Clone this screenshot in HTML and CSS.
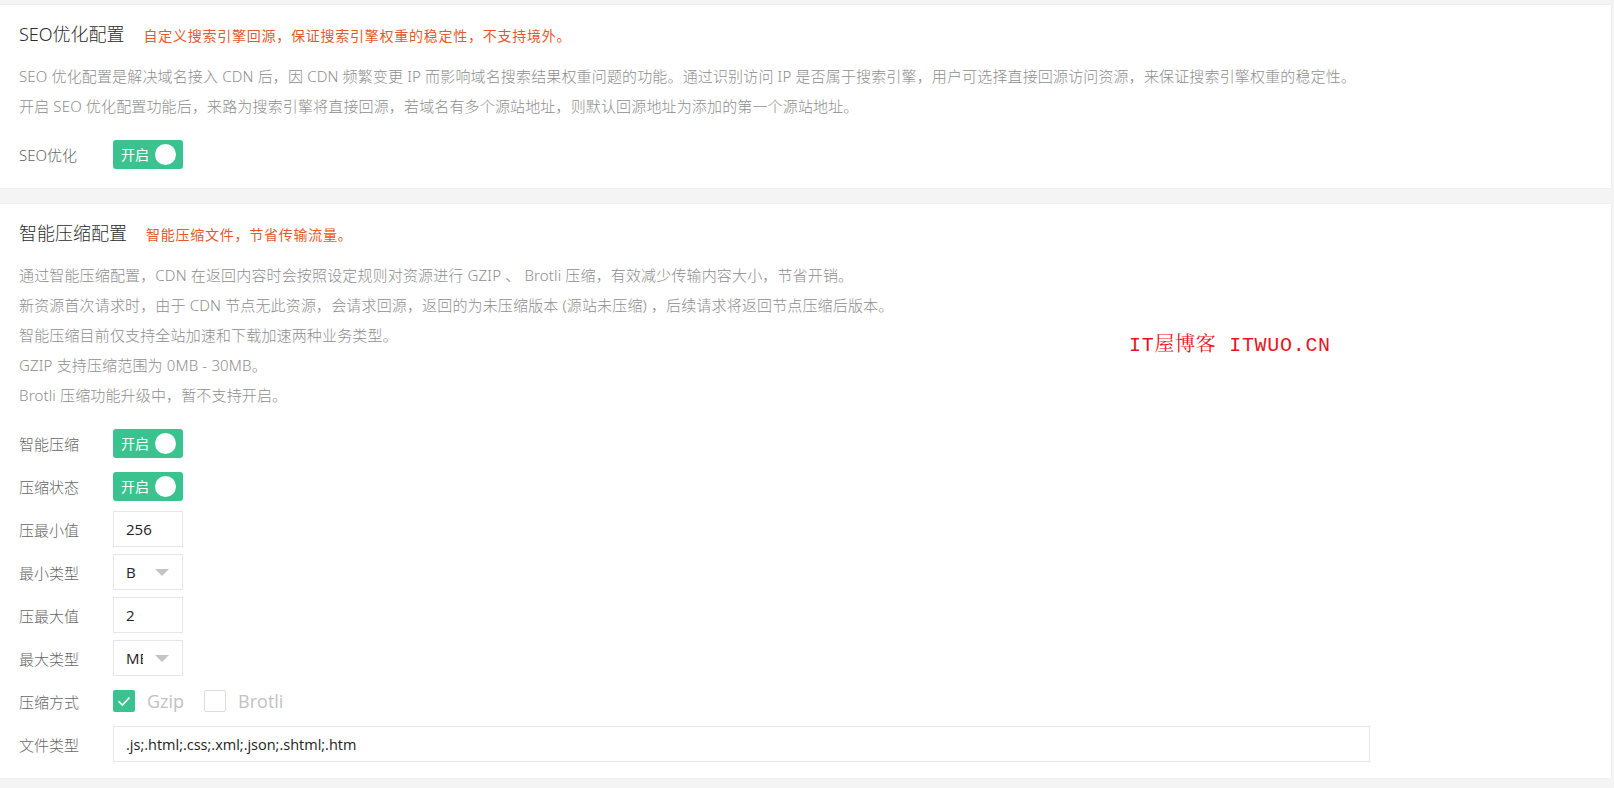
FILE: index.html
```html
<!DOCTYPE html>
<html lang="zh-CN">
<head>
    <meta charset="UTF-8">
    <title>CDN 配置</title>
    <link rel="stylesheet" href="styles.css">
</head>
<body>
    <div class="card">
        <div class="card-head">
            <h3>SEO优化配置</h3>
            <span class="tip">自定义搜索引擎回源，保证搜索引擎权重的稳定性，不支持境外。</span>
        </div>
        <div class="desc">
            <p>SEO 优化配置是解决域名接入 CDN 后，因 CDN 频繁变更 IP 而影响域名搜索结果权重问题的功能。通过识别访问 IP 是否属于搜索引擎，用户可选择直接回源访问资源，来保证搜索引擎权重的稳定性。</p>
            <p>开启 SEO 优化配置功能后，来路为搜索引擎将直接回源，若域名有多个源站地址，则默认回源地址为添加的第一个源站地址。</p>
        </div>
        <div class="form">
            <div class="row">
                <label>SEO优化</label>
                <div class="switch"><span>开启</span><i></i></div>
            </div>
        </div>
    </div>

    <div class="card">
        <div class="card-head">
            <h3>智能压缩配置</h3>
            <span class="tip">智能压缩文件，节省传输流量。</span>
        </div>
        <div class="desc">
            <p>通过智能压缩配置，CDN 在返回内容时会按照设定规则对资源进行 GZIP 、 Brotli 压缩，有效减少传输内容大小，节省开销。</p>
            <p>新资源首次请求时，由于 CDN 节点无此资源，会请求回源，返回的为未压缩版本 (源站未压缩) ，后续请求将返回节点压缩后版本。</p>
            <p>智能压缩目前仅支持全站加速和下载加速两种业务类型。</p>
            <p>GZIP 支持压缩范围为 0MB - 30MB。</p>
            <p>Brotli 压缩功能升级中，暂不支持开启。</p>
        </div>
        <div class="form">
            <div class="row">
                <label>智能压缩</label>
                <div class="switch"><span>开启</span><i></i></div>
            </div>
            <div class="row">
                <label>压缩状态</label>
                <div class="switch"><span>开启</span><i></i></div>
            </div>
            <div class="row">
                <label>压最小值</label>
                <div class="input small">256</div>
            </div>
            <div class="row">
                <label>最小类型</label>
                <div class="input small select"><span class="val">B</span><i class="caret"></i></div>
            </div>
            <div class="row">
                <label>压最大值</label>
                <div class="input small">2</div>
            </div>
            <div class="row">
                <label>最大类型</label>
                <div class="input small select"><span class="val">MB</span><i class="caret"></i></div>
            </div>
            <div class="row">
                <label>压缩方式</label>
                <div class="check on">
                    <svg width="22" height="22" viewBox="0 0 22 22"><path d="M5.5 11.2 L9.4 15 L16.5 7.5" fill="none" stroke="#fff" stroke-width="1.6"/></svg>
                </div>
                <span class="check-text">Gzip</span>
                <div class="check"></div>
                <span class="check-text">Brotli</span>
            </div>
            <div class="row">
                <label>文件类型</label>
                <div class="input wide">.js;.html;.css;.xml;.json;.shtml;.htm</div>
            </div>
        </div>
        <div class="watermark">IT屋博客 ITWUO.CN</div>
    </div>
</body>
</html>
```

FILE: styles.css
```css
body {
    margin: 0;
    padding: 5px 3px 0 0;
    background-color: #f4f4f4;
    font-family: "Noto Sans", "Noto Sans CJK SC", sans-serif;
    color: #333;
}

.card {
    position: relative;
    background-color: #fff;
    padding: 17px 19px 16px;
    margin-bottom: 16px;
    box-shadow: 0 0 2px rgba(0, 0, 0, 0.06);
}

.card-head {
    display: flex;
    align-items: baseline;
    height: 24px;
    line-height: 24px;
}

.card-head h3 {
    margin: 0;
    font-size: 18px;
    font-weight: 300;
    color: #2b2b2b;
}

.card-head .tip {
    margin-left: 19px;
    font-size: 14px;
    letter-spacing: 0.75px;
    color: #e25a2c;
}

.desc {
    margin-top: 15px;
}

.desc p {
    margin: 0;
    font-size: 15px;
    line-height: 30px;
    font-weight: 300;
    letter-spacing: 0.15px;
    color: #8e8e8e;
}

.form {
    margin-top: 15px;
    display: flex;
    flex-direction: column;
    gap: 7px;
}

.row {
    display: flex;
    align-items: center;
    height: 36px;
}

.row label {
    width: 94px;
    font-size: 15px;
    font-weight: 300;
    color: #666;
}

.switch {
    display: flex;
    align-items: center;
    justify-content: space-between;
    width: 70px;
    height: 29px;
    box-sizing: border-box;
    padding: 0 7px 0 8px;
    background-color: #3ac38f;
    border-radius: 3px;
    color: #fff;
    font-size: 14px;
}

.switch i {
    width: 21px;
    height: 21px;
    border-radius: 50%;
    background-color: #fff;
}

.input {
    display: flex;
    align-items: center;
    height: 36px;
    box-sizing: border-box;
    padding-left: 12px;
    border: 1px solid #e6e6e6;
    font-family: "Open Sans", "Noto Sans CJK SC", sans-serif;
    font-size: 15px;
    color: #222;
}

.input.small {
    width: 70px;
}

.input.wide {
    width: 1257px;
    font-size: 14.5px;
}

.select .val {
    width: 17px;
    overflow: hidden;
    white-space: nowrap;
}

.select .caret {
    margin-left: 12px;
    width: 0;
    height: 0;
    border-left: 7px solid transparent;
    border-right: 7px solid transparent;
    border-top: 7px solid #c4c4c4;
}

.check {
    width: 22px;
    height: 22px;
    box-sizing: border-box;
    border: 1px solid #dcdcdc;
    border-radius: 2px;
}

.check.on {
    border: none;
    background-color: #3ac38f;
}

.check svg {
    display: block;
}

.check-text {
    margin: 0 20px 0 12px;
    font-family: "Open Sans", sans-serif;
    font-size: 18px;
    color: #c2c2c2;
}

.watermark {
    position: absolute;
    left: 1129px;
    top: 124px;
    font-family: "Liberation Mono", "Noto Serif CJK SC", "Noto Sans CJK SC", monospace;
    font-size: 20px;
    letter-spacing: 0.7px;
    color: #e5151e;
}
```
